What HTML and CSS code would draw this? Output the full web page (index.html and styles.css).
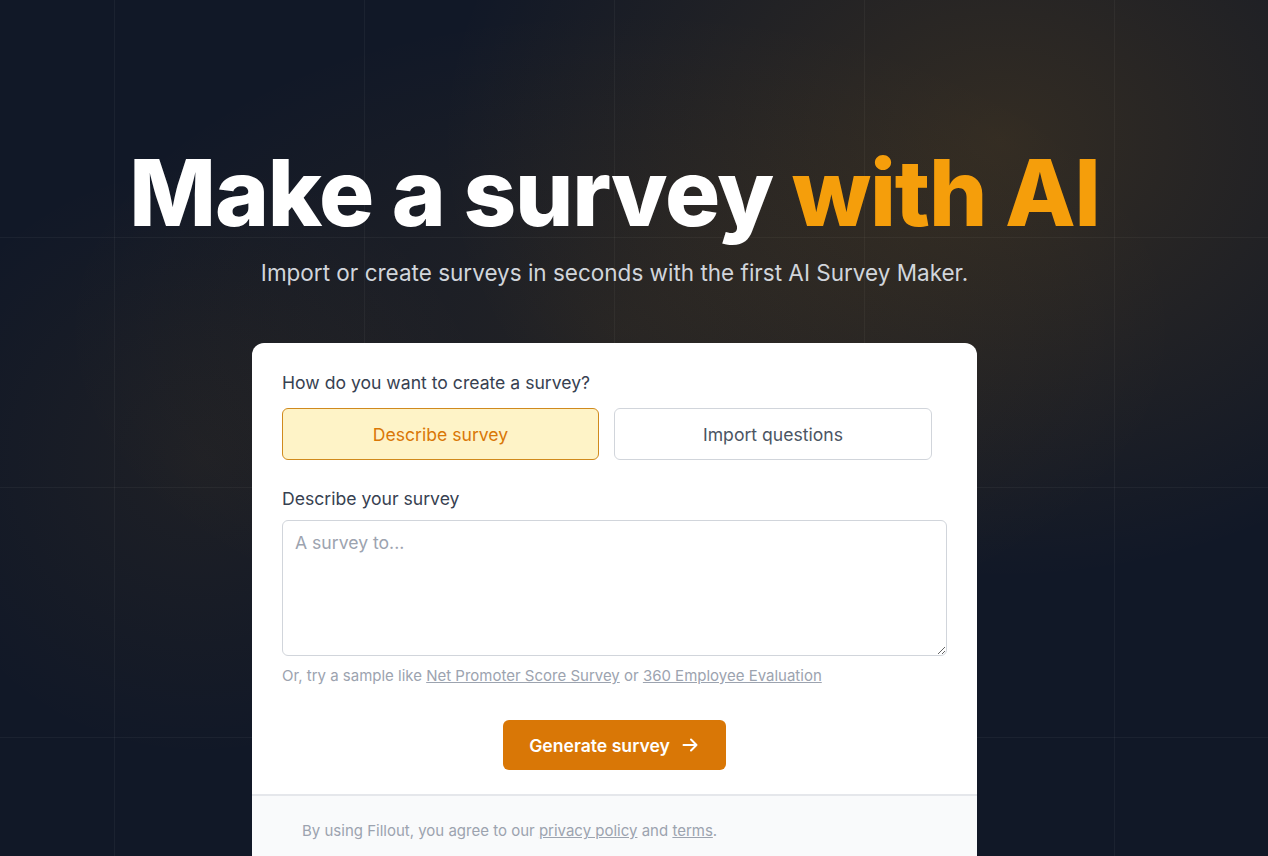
FILE: index.html
```html
<!DOCTYPE html>
<html lang="en">
<head>
    <meta charset="UTF-8">
    <meta name="viewport" content="width=device-width, initial-scale=1.0">
    <title>AI Survey Maker</title>
    <link rel="stylesheet" href="styles.css">
</head>
<body>
    <main class="hero">
        <h1 class="title">Make a survey <span class="accent">with AI</span></h1>
        <p class="subtitle">Import or create surveys in seconds with the first AI Survey Maker.</p>

        <div class="card">
            <div class="card-body">
                <div class="label">How do you want to create a survey?</div>
                <div class="modes">
                    <button class="mode active">Describe survey</button>
                    <button class="mode">Import questions</button>
                </div>

                <div class="label">Describe your survey</div>
                <textarea class="prompt" placeholder="A survey to..."></textarea>
                <div class="hint">
                    Or, try a sample like <a href="#">Net Promoter Score Survey</a> or <a href="#">360 Employee Evaluation</a>
                </div>

                <div class="actions">
                    <button class="generate">
                        Generate survey
                        <svg width="20" height="20" viewBox="0 0 20 20" fill="none" stroke="currentColor" stroke-width="2" stroke-linecap="round" stroke-linejoin="round">
                            <path d="M3.5 10h13M11 4.5l5.5 5.5-5.5 5.5"/>
                        </svg>
                    </button>
                </div>
            </div>
            <div class="card-footer">
                By using Fillout, you agree to our <a href="#">privacy policy</a> and <a href="#">terms</a>.
            </div>
        </div>
    </main>
</body>
</html>
```

FILE: styles.css
```css
body {
    margin: 0;
    height: 856px;
    overflow: hidden;
    font-family: Inter, "Noto Sans", sans-serif;
    background-color: #111827;
    background-image:
        radial-gradient(ellipse 560px 440px at 1000px 140px, rgba(245, 158, 11, 0.15), rgba(245, 158, 11, 0) 100%),
        radial-gradient(ellipse 560px 320px at 620px 330px, rgba(245, 158, 11, 0.08), rgba(245, 158, 11, 0) 100%),
        radial-gradient(ellipse 300px 300px at 200px 460px, rgba(245, 158, 11, 0.06), rgba(245, 158, 11, 0) 100%),
        linear-gradient(to right, rgba(255, 255, 255, 0.045) 1px, transparent 1px),
        linear-gradient(to bottom, rgba(255, 255, 255, 0.045) 1px, transparent 1px);
    background-size: auto, auto, auto, 250px 250px, 250px 250px;
    background-position: 0 0, 0 0, 0 0, 114px 0, 0 -13px;
}

.hero {
    width: 1229px;
    display: flex;
    flex-direction: column;
    align-items: center;
}

.title {
    margin: 138px 0 0;
    font-size: 92px;
    font-weight: 800;
    line-height: 110px;
    letter-spacing: -1.25px;
    color: #ffffff;
}

.accent {
    color: #f59e0b;
}

.subtitle {
    margin: 10px 0 0;
    font-size: 22.5px;
    line-height: 30px;
    color: #d1d5db;
}

.card {
    margin-top: 55px;
    width: 725px;
    background-color: #fff;
    border-radius: 12px;
    overflow: hidden;
}

.card-body {
    padding: 29px 30px 24px;
}

.label {
    font-size: 17.6px;
    line-height: 22px;
    color: #374151;
}

.modes {
    display: grid;
    grid-template-columns: 317px 318px;
    gap: 15px;
    margin: 14px 0 28px;
}

.mode {
    height: 52px;
    font-family: inherit;
    font-size: 17.6px;
    color: #4b5563;
    background-color: #fff;
    border: 1px solid #d1d5db;
    border-radius: 6px;
    cursor: pointer;
}

.mode.active {
    color: #d97706;
    background-color: #fef3c7;
    border-color: #d08a1d;
}

.prompt {
    display: block;
    box-sizing: border-box;
    width: 100%;
    height: 136px;
    margin-top: 10px;
    padding: 11px 12px;
    font-family: inherit;
    font-size: 17.6px;
    color: #111827;
    border: 1px solid #d1d5db;
    border-radius: 6px;
    outline: none;
}

.prompt::placeholder {
    color: #9ca3af;
}

.hint {
    margin-top: 9px;
    font-size: 15px;
    line-height: 22px;
    color: #9ca3af;
}

.hint a,
.card-footer a {
    color: #9ca3af;
    text-decoration: underline;
}

.actions {
    display: flex;
    justify-content: center;
    margin-top: 33px;
}

.generate {
    display: flex;
    align-items: center;
    gap: 10px;
    height: 50px;
    padding: 0 26px;
    font-family: inherit;
    font-size: 17.6px;
    font-weight: 600;
    color: #fff;
    background-color: #d97706;
    border: none;
    border-radius: 6px;
    cursor: pointer;
}

.card-footer {
    padding: 24px 50px 40px;
    font-size: 15px;
    line-height: 22px;
    color: #9ca3af;
    background-color: #f9fafb;
    border-top: 2px solid #e5e7eb;
}
```
